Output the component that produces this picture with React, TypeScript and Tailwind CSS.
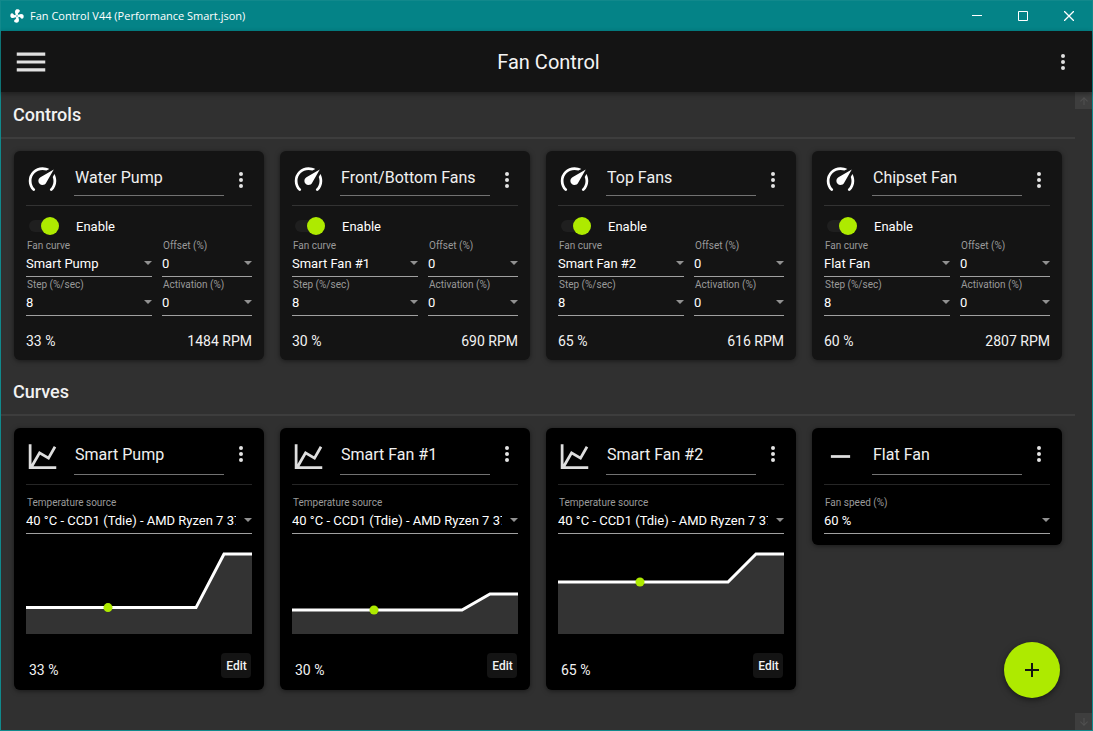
import { useState } from "react"
import type { ReactNode } from "react"
import { clsx } from "clsx"

const PATHS = {
    fan: "M12,11A1,1 0 0,0 11,12A1,1 0 0,0 12,13A1,1 0 0,0 13,12A1,1 0 0,0 12,11M12.5,2C17,2 17.11,5.57 14.75,6.75C13.76,7.24 13.32,8.29 13.13,9.22C13.61,9.42 14.03,9.73 14.35,10.13C18.05,8.13 22.03,8.92 22.03,12.5C22.03,17 18.46,17.1 17.28,14.73C16.78,13.74 15.72,13.3 14.79,13.11C14.59,13.59 14.28,14 13.88,14.34C15.87,18.03 15.08,22 11.5,22C7,22 6.91,18.42 9.27,17.24C10.25,16.75 10.69,15.71 10.89,14.79C10.4,14.59 9.97,14.27 9.65,13.87C5.96,15.85 2,15.07 2,11.5C2,7 5.56,6.89 6.74,9.26C7.24,10.25 8.29,10.68 9.22,10.87C9.41,10.39 9.73,9.97 10.14,9.65C8.15,5.96 8.94,2 12.5,2Z",
    menu: "M3,6H21V8H3V6M3,11H21V13H3V11M3,16H21V18H3V16Z",
    dots: "M12,16A2,2 0 0,1 14,18A2,2 0 0,1 12,20A2,2 0 0,1 10,18A2,2 0 0,1 12,16M12,10A2,2 0 0,1 14,12A2,2 0 0,1 12,14A2,2 0 0,1 10,12A2,2 0 0,1 12,10M12,4A2,2 0 0,1 14,6A2,2 0 0,1 12,8A2,2 0 0,1 10,6A2,2 0 0,1 12,4Z",
    gauge: "M12,16A3,3 0 0,1 9,13C9,11.88 9.61,10.9 10.5,10.39L20.21,4.77L14.68,14.35C14.18,15.33 13.17,16 12,16M12,3C13.81,3 15.5,3.5 16.97,4.32L14.87,5.53C14,5.19 13,5 12,5A8,8 0 0,0 4,13C4,15.21 4.89,17.21 6.34,18.65H6.35C6.74,19.04 6.74,19.67 6.35,20.06C5.96,20.45 5.32,20.45 4.93,20.07V20.07C3.12,18.26 2,15.76 2,13A10,10 0 0,1 12,3M22,13C22,15.76 20.88,18.26 19.07,20.07V20.07C18.68,20.45 18.05,20.45 17.66,20.06C17.27,19.67 17.27,19.04 17.66,18.65V18.65C19.11,17.2 20,15.21 20,13C20,12 19.81,11 19.46,10.1L20.67,8C21.5,9.5 22,11.18 22,13Z",
    chart: "M16,11.78L20.24,4.45L21.97,5.45L16.74,14.5L10.23,10.75L5.46,19H22V21H2V3H4V17.54L9.5,8L16,11.78Z",
    flat: "M19,13H5V11H19V13Z",
    up: "M13,20H11V8L5.5,13.5L4.08,12.08L12,4.16L19.92,12.08L18.5,13.5L13,8V20Z",
    down: "M11,4H13V16L18.5,10.5L19.92,11.92L12,19.84L4.08,11.92L5.5,10.5L11,16V4Z",
    plus: "M19,13H13V19H11V13H5V11H11V5H13V11H19V13Z",
}

type IconName = keyof typeof PATHS

const Icon = ({ name, className }: { name: IconName; className?: string }) => (
    <svg viewBox="0 0 24 24" fill="currentColor" aria-hidden="true" className={clsx("shrink-0", className)}>
        <path d={PATHS[name]} />
    </svg>
)

const controls = [
    { id: "pump", name: "Water Pump", curve: "Smart Pump", percent: 33, rpm: 1484 },
    { id: "front", name: "Front/Bottom Fans", curve: "Smart Fan #1", percent: 30, rpm: 690 },
    { id: "top", name: "Top Fans", curve: "Smart Fan #2", percent: 65, rpm: 616 },
    { id: "chipset", name: "Chipset Fan", curve: "Flat Fan", percent: 60, rpm: 2807 },
]

const curves = [
    { id: "curve-pump", name: "Smart Pump", low: 33, high: 100 },
    { id: "curve-1", name: "Smart Fan #1", low: 30, high: 50 },
    { id: "curve-2", name: "Smart Fan #2", low: 65, high: 100 },
]

const SOURCE = "40 °C - CCD1 (Tdie) - AMD Ryzen 7 3700X"

const TitleBar = () => (
    <div className="flex h-[30px] items-center bg-[#048387] text-white">
        <Icon name="fan" className="ml-2 size-4" />
        <span className="ml-[5px] flex-1 font-['Open_Sans','Noto_Sans',sans-serif] text-[11px]">
            Fan Control V44 (Performance Smart.json)
        </span>
        <button aria-label="Minimize" className="flex h-full w-[46px] items-center justify-center">
            <svg viewBox="0 0 10 10" className="size-[10px]" stroke="currentColor"><path d="M0 4.5H10" /></svg>
        </button>
        <button aria-label="Maximize" className="flex h-full w-[46px] items-center justify-center">
            <svg viewBox="0 0 10 10" className="size-[10px]" stroke="currentColor" fill="none"><path d="M.5 .5H9.5V9.5H.5Z" /></svg>
        </button>
        <button aria-label="Close" className="flex h-full w-[46px] items-center justify-center">
            <svg viewBox="0 0 10 10" className="size-[10px]" stroke="currentColor" strokeWidth="1.3"><path d="M0 0L10 10M10 0L0 10" /></svg>
        </button>
    </div>
)

const AppBar = () => (
    <header className="relative grid h-[61px] grid-cols-3 items-center bg-[#141414] px-[11px] shadow-[0_2px_5px_#00000060]">
        <button aria-label="Menu" className="justify-self-start text-[#e0e0e0]">
            <Icon name="menu" className="size-[38px]" />
        </button>
        <h1 className="pl-1 text-center text-[20px] text-[#f4f4f4]">Fan Control</h1>
        <button aria-label="More options" className="flex w-9 justify-center justify-self-end text-[#e0e0e0]">
            <Icon name="dots" className="size-6" />
        </button>
    </header>
)

const Section = ({ title, children }: { title: string; children: ReactNode }) => (
    <section className="mb-[9px]">
        <h2 className="flex h-[45px] items-center pl-3 text-[18px] font-medium text-[#f2f2f2]">{title}</h2>
        <hr className="border-t-2 border-[#3d3d3d]" />
        <div className="grid grid-cols-[repeat(auto-fill,250px)] items-start gap-4 pt-3 pl-[13px]">
            {children}
        </div>
    </section>
)

const Card = ({ dark, children }: { dark?: boolean; children: ReactNode }) => (
    <article className={clsx("rounded-md px-3 shadow-[0_1px_5px_#00000080]", dark ? "bg-black" : "bg-[#141414]")}>
        {children}
    </article>
)

const CardHeader = ({ icon, name, tall }: { icon: IconName; name: string; tall?: boolean }) => (
    <div className={clsx("flex items-start border-b", tall ? "h-[57px] border-[#262626]" : "h-[55px] border-[#333333]")}>
        <Icon name={icon} className={clsx("mt-3 size-[33px]", tall ? "text-[#dedede]" : "text-white")} />
        <input
            aria-label="Name"
            defaultValue={name}
            className={clsx(
                "mt-2.5 ml-[15px] min-w-0 flex-1 border-b border-[#727272] bg-transparent pl-px text-[16px] text-[#f0f0f0] outline-none",
                tall ? "h-[37px] pb-1" : "h-[35px] pb-0.5"
            )}
        />
        <button
            aria-label={name + " options"}
            className={clsx("ml-1.5 flex w-[22px] justify-center text-[#e4e4e4]", tall ? "mt-3.5" : "mt-[17px]")}
        >
            <Icon name="dots" className="size-6" />
        </button>
    </div>
)

const Field = ({ id, label, value }: { id: string; label: string; value: string }) => (
    <div className="relative">
        <label htmlFor={id} className="block h-[15px] pl-px text-[10px] leading-4 text-[#9a9a9a]">{label}</label>
        <select
            id={id}
            className="block h-6 w-full appearance-none border-b border-[#a0a0a0] bg-transparent pr-4 pb-0.5 text-[13px] text-white outline-none"
        >
            <option>{value}</option>
        </select>
        {/* Drop-down arrow */}
        <svg viewBox="0 0 8 4" fill="#919191" className="pointer-events-none absolute right-0 bottom-3 h-1 w-2">
            <path d="M0 0H8L4 4Z" />
        </svg>
    </div>
)

const ControlCard = ({ id, name, curve, percent, rpm }: (typeof controls)[number]) => {
    const [enabled, setEnabled] = useState(true)

    return (
        <Card>
            <CardHeader icon="gauge" name={name} />
            <div className="flex h-8 items-center pt-2">
                <input
                    id={id + "-enable"}
                    type="checkbox"
                    checked={enabled}
                    onChange={() => setEnabled(!enabled)}
                    className={clsx(
                        "ml-[3px] flex h-3 w-[30px] appearance-none items-center rounded-full bg-[#1f1f1f]",
                        "after:block after:size-[18px] after:shrink-0 after:rounded-full after:bg-[#757575]",
                        "checked:justify-end checked:after:bg-[#aeea00]"
                    )}
                />
                <label htmlFor={id + "-enable"} className="pt-0.5 pl-[17px] text-[13px] text-white">Enable</label>
            </div>
            <div className="grid grid-cols-[7fr_5fr] gap-x-2.5">
                <Field id={id + "-curve"} label="Fan curve" value={curve} />
                <Field id={id + "-offset"} label="Offset (%)" value="0" />
                <Field id={id + "-step"} label="Step (%/sec)" value="8" />
                <Field id={id + "-activation"} label="Activation (%)" value="0" />
            </div>
            <div className="flex h-11 items-center justify-between pt-1.5 text-[14px] text-[#f2f2f2]">
                <span>{percent} %</span>
                <span>{rpm} RPM</span>
            </div>
        </Card>
    )
}

const CurveGraph = ({ low, high }: { low: number; high: number }) => {
    const y = (v: number) => 82 - v * 0.8
    const line = `M0 ${y(low)}H170L198 ${y(high)}H226`

    return (
        <svg viewBox="0 0 226 82" className="mt-[18px] block w-full">
            <path d={line + "V82H0Z"} fill="#333333" />
            <path d={line} fill="none" stroke="#ffffff" strokeWidth="3" />
            <circle cx="82" cy={y(low)} r="4.5" fill="#aeea00" />
        </svg>
    )
}

const CurveCard = ({ id, name, low, high }: (typeof curves)[number]) => (
    <Card dark>
        <CardHeader icon="chart" name={name} tall />
        <div className="pt-2.5">
            <Field id={id + "-source"} label="Temperature source" value={SOURCE} />
        </div>
        <CurveGraph low={low} high={high} />
        <div className="flex items-end justify-between pt-[19px] pr-px pb-3 pl-[3px] text-[#f2f2f2]">
            <span className="text-[14px] leading-4">{low} %</span>
            <button className="h-[25px] w-[30px] rounded-sm bg-[#141414] pl-px text-[12px] font-medium">Edit</button>
        </div>
    </Card>
)

export default function App() {
    return (
        <div className="relative flex min-h-screen flex-col border border-[#11898c] bg-[#303030] font-[Roboto,sans-serif]">
            <TitleBar />
            <AppBar />
            <div className="flex flex-1">
                <main className="flex-1">
                    <Section title="Controls">
                        {controls.map((c) => <ControlCard key={c.id} {...c} />)}
                    </Section>
                    <Section title="Curves">
                        {curves.map((c) => <CurveCard key={c.id} {...c} />)}
                        <Card dark>
                            <CardHeader icon="flat" name="Flat Fan" tall />
                            <div className="pt-2.5 pb-[11px]">
                                <Field id="flat-speed" label="Fan speed (%)" value="60 %" />
                            </div>
                        </Card>
                    </Section>
                </main>

                {/* Scroll buttons */}
                <div className="flex w-[17px] flex-col justify-between text-[#505050]">
                    <button aria-label="Scroll up" className="flex size-[17px] items-center justify-center bg-[#3e3e3e]">
                        <Icon name="up" className="size-3" />
                    </button>
                    <button aria-label="Scroll down" className="flex size-[17px] items-center justify-center bg-[#3e3e3e]">
                        <Icon name="down" className="size-3" />
                    </button>
                </div>
            </div>

            <button
                aria-label="Add"
                className="absolute right-8 bottom-8 flex size-14 items-center justify-center rounded-full bg-[#aeea00] text-[#141414] shadow-[0_2px_6px_#00000080]"
            >
                <Icon name="plus" className="size-6" />
            </button>
        </div>
    )
}
